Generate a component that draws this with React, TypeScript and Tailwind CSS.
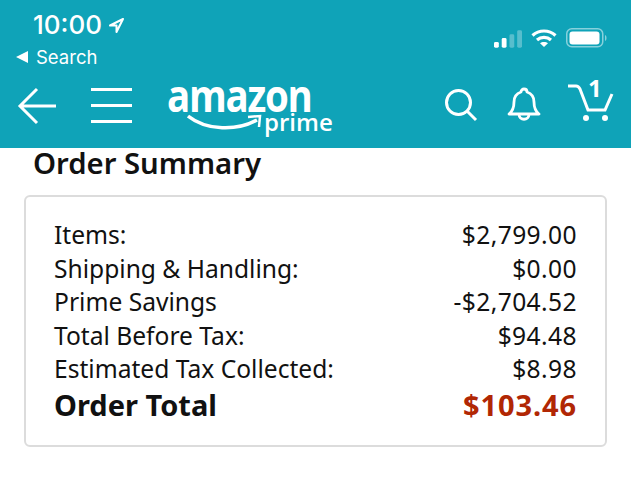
export default function App() {
  const rows = [
    ["Items:", "$2,799.00"],
    ["Shipping & Handling:", "$0.00"],
    ["Prime Savings", "-$2,704.52"],
    ["Total Before Tax:", "$94.48"],
    ["Estimated Tax Collected:", "$8.98"],
  ];
  return (
    <div className="w-[631px] h-[479px] overflow-hidden bg-white font-['Noto_Sans',sans-serif]">
      <header className="h-[148px] bg-[#0fa3b8] text-white flex flex-col">
        <div className="flex justify-between h-[78px]">
          <div className="pl-[16px] pt-[9px]">
            <div className="flex items-center pl-[17px] h-[32px] gap-[6px]">
              <span className="font-['Inter',sans-serif] text-[26px] font-medium leading-none">10:00</span>
              <svg width="17" height="17" viewBox="0 0 17 17" fill="none" stroke="white" strokeWidth="2" strokeLinejoin="round"><path d="M15 2 2 8.5h6.5V15Z" /></svg>
            </div>
            <div className="flex items-center h-[24px] mt-[4px] gap-[8px]">
              <svg width="12" height="12" viewBox="0 0 12 12" fill="white"><path d="M0 6 12 0v12Z" /></svg>
              <span className="font-['Inter',sans-serif] text-[18.5px] leading-none">Search</span>
            </div>
          </div>
          <div className="pt-[28px] pr-[23px] flex items-start gap-[9px]">
            <svg width="28" height="19" viewBox="0 0 29 19" fill="white" className="mt-[2px]">
              <rect x="0" y="12" width="5" height="6" rx="1.5" />
              <rect x="8" y="8" width="5" height="10" rx="1.5" />
              <rect x="16" y="4" width="5" height="14" rx="1.5" opacity=".3" />
              <rect x="24" y="0" width="5" height="18" rx="1.5" opacity=".3" />
            </svg>
            <svg width="26" height="20" viewBox="0 0 26 19" fill="none" stroke="white" strokeWidth="3.2">
              <path d="M1.500 7C8 1 18 1 24.500 7" />
              <path d="M6 11.500c4-3.500 10-3.500 14 0" />
              <path d="M13 18.500 9 14.800c2-1.600 6-1.600 8 0Z" fill="white" stroke="none" />
            </svg>
            <svg width="42" height="20" viewBox="0 0 42 20" fill="none">
              <rect x=".75" y=".75" width="36" height="18" rx="5" stroke="white" strokeOpacity=".5" strokeWidth="1.5" />
              <rect x="3.5" y="3.5" width="30" height="13" rx="3" fill="white" />
              <path d="M39 7c2 .5 2 5.500 0 6Z" fill="white" fillOpacity=".5" />
            </svg>
          </div>
        </div>
        <div className="relative flex items-start h-[70px]">
          <svg width="40" height="38" viewBox="0 0 40 38" fill="none" stroke="white" strokeWidth="3" className="ml-[17px] mt-[9px]">
            <path d="M39 19H3M20 2 3 19l17 17" />
          </svg>
          <div className="ml-[34px] mt-[10px] w-[41px] h-[35px] flex flex-col justify-between">
            <div className="h-[3px] bg-white" />
            <div className="h-[3px] bg-white" />
            <div className="h-[3px] bg-white" />
          </div>
          <div className="relative ml-[36px] w-[170px] h-[60px]">
            <span className="absolute left-[-1px] top-[3px] origin-left scale-x-[0.855] font-['Open_Sans',sans-serif] text-[45px] font-bold leading-[28px] tracking-[-1.5px]">amazon</span>
            <svg width="84" height="24" viewBox="0 0 84 24" fill="none" className="absolute left-[19px] top-[35px]">
              <path d="M1 3C20 18 50 18 70 7" stroke="white" strokeWidth="3.5" />
              <path d="M61 4l12-1-1 11" stroke="white" strokeWidth="2.500" />
            </svg>
            <span className="absolute left-[96px] top-[34px] font-['Open_Sans',sans-serif] text-[24px] font-semibold leading-[20px]">prime</span>
          </div>
          <div className="ml-auto flex items-start">
            <svg width="34" height="35" viewBox="0 0 34 35" fill="none" stroke="white" strokeWidth="3" className="mt-[10px]">
              <circle cx="14.500" cy="14.500" r="12" />
              <path d="m23 23 9 9" />
            </svg>
            <svg width="34" height="38" viewBox="0 0 34 38" fill="none" stroke="white" strokeWidth="2.800" strokeLinejoin="round" className="ml-[29px] mt-[8px]">
              <path d="M2 28c4-3 5-6 5-12 0-6 4-9 7-10 0-4 6-4 6 0 3 1 7 4 7 10 0 6 1 9 5 12Z" />
              <path d="M12 28c0 7 10 7 10 0" />
            </svg>
            <div className="relative ml-[26px] mr-[17px] w-[47px] h-[44px]">
              <svg width="47" height="38" viewBox="0 0 47 38" fill="none" stroke="white" strokeWidth="3" className="absolute left-0 top-[6px]">
                <path d="M1 2h8c2 0 3 1 4 3l8 21h17l7-16" />
                <circle cx="19" cy="34" r="3" fill="white" stroke="none" />
                <circle cx="38" cy="34" r="3" fill="white" stroke="none" />
              </svg>
              <span className="absolute left-[21px] top-[-5px] font-['Noto_Sans',sans-serif] text-[24px] font-bold leading-[30px]">1</span>
            </div>
          </div>
        </div>
      </header>
      <h1 className="pl-[33px] text-[29.3px] font-semibold leading-[30px] text-[#111]">Order Summary</h1>
      <section className="mx-[24px] mt-[17px] h-[252px] border-2 border-[#dcdcdc] rounded-[6px] px-[28px] pt-[21px] text-[#111]">
        {rows.map(([l, v]) => (
          <div key={l} className="flex justify-between text-[24.6px] leading-[33.5px]">
            <span>{l}</span>
            <span className="tracking-[0.4px]">{v}</span>
          </div>
        ))}
        <div className="flex justify-between text-[29px] font-bold leading-[36px] mt-[1px]">
          <span>Order Total</span>
          <span className="text-[#b12704] tracking-[0.9px]">$103.46</span>
        </div>
      </section>
    </div>
  );
}
